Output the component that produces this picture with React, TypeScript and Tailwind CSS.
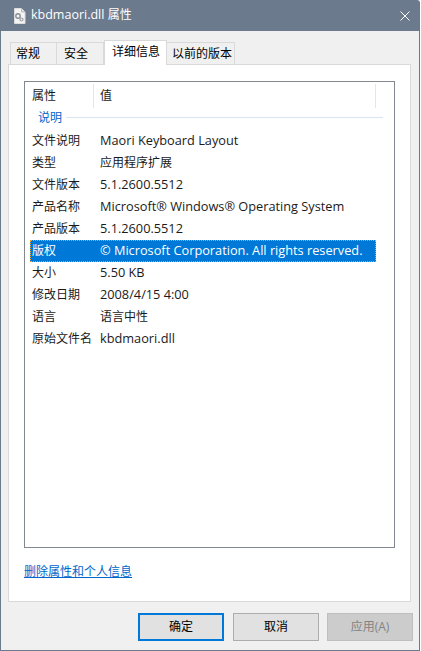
import React from 'react';

const font = "[font-family:'Open_Sans','Noto_Sans_CJK_SC',sans-serif]";

const rows: [string, string, boolean][] = [
  ['文件说明', 'Maori Keyboard Layout', false],
  ['类型', '应用程序扩展', true],
  ['文件版本', '5.1.2600.5512', false],
  ['产品名称', 'Microsoft® Windows® Operating System', false],
  ['产品版本', '5.1.2600.5512', false],
  ['版权', '© Microsoft Corporation. All rights reserved.', false],
  ['大小', '5.50 KB', false],
  ['修改日期', '2008/4/15 4:00', false],
  ['语言', '语言中性', true],
  ['原始文件名', 'kbdmaori.dll', false],
];

const FileIcon = () => (
  <svg width="16" height="16" viewBox="0 0 16 16" className="shrink-0">
    <path d="M2.5 .5h7l3.5 3.5v11.500H2.500z" fill="#f4f4f4" stroke="#dcdcdc" strokeWidth="1" />
    <path d="M9.500 .5v3.500h3.500" fill="#ddd" stroke="#bbb" strokeWidth="1" />
    <circle cx="6" cy="8" r="2.200" fill="none" stroke="#8a8f96" strokeWidth="1.400" />
    <circle cx="9.500" cy="11.500" r="1.500" fill="none" stroke="#9a9fa6" strokeWidth="1.200" />
  </svg>
);

const Tab = ({ label, w, pad, active }: { label: string; w: string; pad: string; active?: boolean }) => (
  <div
    className={
      active
        ? `${w} ${pad} h-[25px] pb-[2px] -mb-px z-10 bg-white border border-b-0 border-[#d9d9d9] flex items-center text-[12px] text-black`
        : `${w} ${pad} h-[22px] bg-[#f0f0f0] border border-b-0 border-l-0 first:border-l border-[#d9d9d9] flex items-center text-[12px] text-black whitespace-nowrap`
    }
  >
    {label}
  </div>
);

const Button = ({ label, kind }: { label: string; kind?: 'primary' | 'disabled' }) => {
  let cls = 'bg-[#e1e1e1] border border-[#adadad] text-black';
  if (kind === 'primary') cls = 'mr-px bg-[#e1e1e1] border-2 border-[#0078d7] text-black';
  if (kind === 'disabled') cls = 'bg-[#cccccc] border border-[#bfbfbf] text-[#838383]';
  return <div className={`w-[86px] h-[28px] flex items-center justify-center text-[12px] ${cls}`}>{label}</div>;
};

export default function App() {
  return (
    <div className={`w-[421px] h-[651px] bg-white overflow-hidden ${font}`}>
      <div className="w-[420px] h-[651px] flex flex-col rounded-tr-[3px] bg-[#6b7a8d] px-px pb-px">
        {/* title bar */}
        <div className="h-[31px] shrink-0 flex items-center pl-[11px] pr-[9px] text-white">
          <FileIcon />
          <span className="ml-[3px] text-[12.500px]">
            kbdmaori.dll <span className="text-[12px]">属性</span>
          </span>
          <svg width="10" height="10" viewBox="0 0 10 10" className="ml-auto">
            <path d="M.5 .5l9 9M9.500 .5l-9 9" stroke="#ffffff" strokeWidth="1" fill="none" />
          </svg>
        </div>

        <div className="flex-1 bg-[#f0f0f0] flex flex-col px-[7px] pt-[9px]">
          {/* tabs */}
          <div className="flex items-end pl-[2px] h-[24px] shrink-0">
            <Tab label="常规" w="w-[47px]" pad="pl-[5px]" />
            <Tab label="安全" w="w-[47px]" pad="pl-[7px]" />
            <Tab label="详细信息" w="w-[63px]" pad="pl-[7px]" active />
            <Tab label="以前的版本" w="w-[68px]" pad="pl-[5px]" />
          </div>

          {/* panel */}
          <div className="w-[403px] h-[538px] bg-white border border-[#d9d9d9] flex flex-col px-[15px] pt-[16px] shrink-0">
            <div className="w-[371px] h-[467px] border border-[#828790] pt-[2px] px-[5px] shrink-0">
              {/* header */}
              <div className="flex h-[24px] text-[12px] text-[#1a1a1a]">
                <div className="w-[64px] pl-[2px] border-r border-[#e5e5e5] flex items-center">属性</div>
                <div className="w-[282px] pl-[6px] border-r border-[#e5e5e5] flex items-center">值</div>
              </div>

              {/* group */}
              <div className="flex items-center h-[22px] pb-[3px] pl-[8px]">
                <span className="text-[12px] text-[#0066cc]">说明</span>
                <div className="h-px w-[317px] ml-[4px] bg-[#dbe5f1]" />
              </div>

              {/* rows */}
              <div className="flex flex-col">
                {rows.map(([k, v, cjk], i) => (
                  <div
                    key={k}
                    className={
                      i === 5
                        ? 'w-[346px] h-[22px] flex items-center whitespace-nowrap bg-[#0078d7] text-white border border-dotted border-[#f0a030]'
                        : 'w-[346px] h-[22px] flex items-center whitespace-nowrap text-[#1a1a1a] border border-transparent'
                    }
                  >
                    <span className="w-[69px] pl-px shrink-0 text-[12px]">{k}</span>
                    <span className={cjk ? 'text-[12px]' : 'text-[12.750px]'}>{v}</span>
                  </div>
                ))}
              </div>
            </div>

            <div className="mt-[15px] text-[12px] text-[#0066cc] underline">删除属性和个人信息</div>
          </div>

          {/* buttons */}
          <div className="flex justify-end gap-2 mt-[11px] -mr-[1px]">
            <Button label="确定" kind="primary" />
            <Button label="取消" />
            <Button label="应用(A)" kind="disabled" />
          </div>
        </div>
      </div>
    </div>
  );
}
